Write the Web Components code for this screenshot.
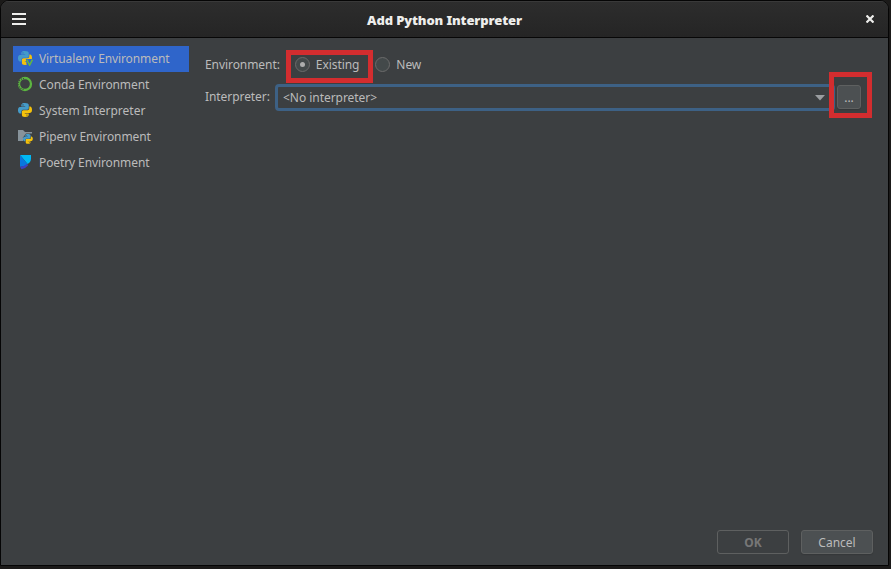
<!DOCTYPE html>
<html lang="en">
<head>
<meta charset="utf-8">
<title>Add Python Interpreter</title>
<style>
html, body { margin: 0; height: 100%; overflow: hidden; background: #1b1a19; }
body { font: 12px/16px "Noto Sans", sans-serif; color: #bbbbbb; }
</style>
</head>
<body>
<interpreter-dialog></interpreter-dialog>

<template id="dialog">
<style>
:host { display: flex; flex-direction: column; box-sizing: border-box; width: 889px; height: 566px; border: 1px solid #050505; border-radius: 9px 9px 0 0; overflow: hidden; background: #3c3f41; }
main { flex: 1; display: grid; grid-template-columns: 176px 1fr; column-gap: 16px; padding: 8px 15px 0 12px; }
nav { display: flex; flex-direction: column; letter-spacing: -.1px; }
.wide { letter-spacing: 0; }
footer { display: flex; justify-content: flex-end; gap: 12px; padding: 0 15px 11px 0; }
</style>
<title-bar>Add Python Interpreter</title-bar>
<main>
  <nav>
    <env-item icon="venv" selected>Virtualenv Environment</env-item>
    <env-item icon="conda">Conda Environment</env-item>
    <env-item icon="python" class="wide">System Interpreter</env-item>
    <env-item icon="pipenv">Pipenv Environment</env-item>
    <env-item icon="poetry">Poetry Environment</env-item>
  </nav>
  <env-form></env-form>
</main>
<footer><push-button disabled>OK</push-button><push-button>Cancel</push-button></footer>
</template>

<template id="titlebar">
<style>
:host { display: grid; grid-template-columns: 40px 1fr 40px; align-items: center; box-sizing: border-box; height: 37px; padding-top: 1px; background: linear-gradient(#2d2d2d, #252525); box-shadow: inset 0 1px #393939; border-bottom: 1px solid #070707; font-weight: 700; font-size: 13px; line-height: 18px; letter-spacing: -.13px; color: #eeeeec; }
b { text-align: center; }
svg { display: block; }
.menu { margin-left: 11px; }
.close { margin: -1px 0 0 18px; }
</style>
<svg class="menu" width="14" height="13" fill="#eeeeec"><path d="M0 0h14v2H0zM0 5h14v2H0zM0 10h14v2H0z"/></svg>
<b><slot></slot></b>
<svg class="close" width="8" height="8" stroke="#eeeeec" stroke-width="2.2"><path d="M.5.5 7.5 7.5M7.500.5.500 7.500"/></svg>
</template>

<template id="item">
<style>
:host { display: flex; align-items: center; gap: 6px; height: 26px; padding-left: 4px; }
:host([selected]) { background: #2f65ca; }
#icon { display: flex; margin-bottom: 2px; }
svg { width: 16px; height: 16px; flex: none; }
</style>
<span id="icon"></span><span><slot></slot></span>
</template>

<template id="form">
<style>
:host { display: block; padding-top: 8px; }
.row { display: flex; align-items: center; letter-spacing: -.07px; }
.env { height: 21px; }
.hl { position: relative; display: flex; margin-left: 15px; }
.hl::after, .more::after { content: ""; position: absolute; z-index: 2; border: 5px solid #d32d2f; pointer-events: none; }
.hl::after { inset: -4px -14px -8px -9px; }
.new { margin-left: 16px; }
.int { margin-top: 8px; height: 28px; }
.more { position: relative; display: flex; margin-left: 2px; }
.more::after { inset: -13px -11px -9px -8px; }
.lab { width: 70px; }
</style>
<div class="row env"><span>Environment:</span><span class="hl"><radio-option checked>Existing</radio-option></span><radio-option class="new">New</radio-option></div>
<div class="row int"><span class="lab">Interpreter:</span><combo-box>&lt;No interpreter&gt;</combo-box><span class="more"><push-button small>...</push-button></span></div>
</template>

<template id="radio">
<style>
:host { display: flex; align-items: center; gap: 6px; height: 21px; }
svg { width: 15px; height: 15px; }
circle.dot { display: none; }
:host([checked]) .dot { display: block; }
</style>
<svg viewBox="0 0 15 15"><circle cx="7.5" cy="7.5" r="7" fill="#43494a" stroke="#6b6b6b"/><circle class="dot" cx="7.5" cy="7.5" r="2.5" fill="#adadad"/></svg><span><slot></slot></span>
</template>

<template id="combo">
<style>
:host { display: flex; flex: none; width: 560px; height: 27px; box-sizing: border-box; align-items: center; justify-content: space-between; padding: 1px 7px 0 5px; border: 3px solid #3d6185; border-radius: 4px; background: #3c3f41; letter-spacing: -.04px; }
svg { display: block; }
</style>
<span><slot></slot></span><svg width="10" height="6"><path d="M0 0h10L5 5.5z" fill="#9a9da0"/></svg>
</template>

<template id="button">
<style>
:host { display: flex; align-items: center; justify-content: center; box-sizing: border-box; width: 72px; height: 24px; padding-top: 2px; border: 1px solid #5e6060; border-radius: 3px; background: #4c5052; box-shadow: 0 1px 1px #35383a; }
:host([disabled]) { background: #3c3f41; color: #777777; font-weight: 700; box-shadow: none; }
:host([small]) { width: 24px; }
</style>
<span><slot></slot></span>
</template>

<script>
const SNAKE = `
<path fill="#459bc8" d="M8 1C5.500 1 4.300 1.600 4.300 3.200V4.600H8.200V5.100H3C1.500 5.100 1 6.500 1 8.200S1.700 11.400 3 11.400H4.400V9.600C4.400 8.300 5.400 7.700 6.500 7.700H10C11.200 7.700 11.800 7 11.800 5.800V3.200C11.800 1.700 10.600 1 8 1zM6 2.300a.6.6 0 1 1 0 1.200.6.6 0 0 1 0-1.200z"/>
<path fill="#f5c20b" d="M8 15C10.500 15 11.700 14.400 11.700 12.800V11.400H7.800V10.900H13C14.500 10.900 15 9.500 15 7.800S14.300 4.600 13 4.600H12.300V6.200C12.300 7.600 11.300 8.300 10.200 8.300H6.500C5.300 8.300 4.900 9 4.900 10.200V12.800C4.900 14.300 5.700 15 8 15zM10 12.500a.6.6 0 1 1 0 1.200.6.6 0 0 1 0-1.200z"/>`;
const ICONS = {
  python: SNAKE,
  venv: SNAKE + '<path d="M8.800 9H16V16H10z" fill="#2f65ca"/><path d="M9.800 9.700 12.600 15.200 15.400 9.700" fill="none" stroke="#62b543" stroke-width="1.500"/>',
  conda: '<circle cx="8" cy="8" r="6" fill="none" stroke="#5cb540" stroke-width="2.300"/><path d="M7 2.500A5.500 5.500 0 0 0 7 13.500" fill="none" stroke="#3c3f41" stroke-width="1.200" stroke-dasharray=".9 1.300"/>',
  pipenv: '<path d="M1 2h5l2 2h7v9H1z" fill="#87939a"/><path d="M9 5.500h6.500V16H6V9.500z" fill="#3c3f41"/><g transform="translate(5.300 5.300) scale(.7)">' + SNAKE + '</g>',
  poetry: '<path d="M3 1H14V4.500Q14 8 10.500 10L3 1z" fill="#00b9f5"/><path d="M3 1 10.500 10Q8 12.700 3 12.800z" fill="#0878df"/><path d="M10.300 9.800 11 11.500Q8.500 14.500 4.500 15.200L3 12.800Q7.500 12.500 10.300 9.800z" fill="#3b42c4"/>'
};
function define(name, id, setup) {
  customElements.define(name, class extends HTMLElement {
    constructor() {
      super();
      this.attachShadow({ mode: "open" }).append(document.getElementById(id).content.cloneNode(true));
    }
    connectedCallback() { if (setup) setup(this); }
  });
}
define("push-button", "button");
define("combo-box", "combo");
define("radio-option", "radio");
define("env-form", "form");
define("env-item", "item", el => {
  el.shadowRoot.getElementById("icon").innerHTML = `<svg viewBox="0 0 16 16">${ICONS[el.getAttribute("icon")]}</svg>`;
});
define("title-bar", "titlebar");
define("interpreter-dialog", "dialog");
</script>
</body>
</html>
